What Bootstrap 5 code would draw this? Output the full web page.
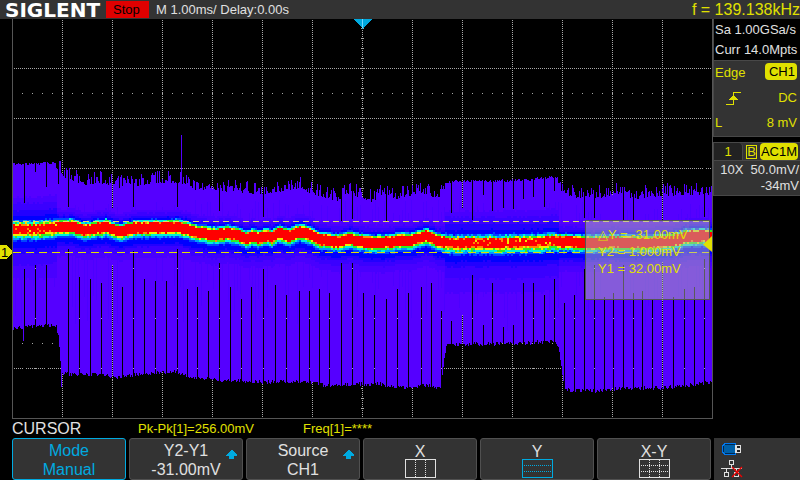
<!DOCTYPE html>
<html lang="en">
<head>
<meta charset="utf-8">
<meta name="viewport" content="width=device-width, initial-scale=1">
<title>Siglent oscilloscope</title>
<link rel="stylesheet" href="https://cdn.jsdelivr.net/npm/bootstrap@5.3.0/dist/css/bootstrap.min.css">
<style>
  body { background: #000; color: #e0e0e0; font: 13px/19px "Liberation Sans", Arial, sans-serif; }
  .topbar { background: #333; height: 19px; white-space: nowrap; }
  .brand { font: bold 20px/21px "DejaVu Sans", sans-serif; color: #fff; width: 106px; padding-left: 5px; }
  .run-state { background: #e00000; color: #000; width: 43px; height: 17px; line-height: 17px; padding-left: 7px; margin-right: 7px; }
  .yel { color: #e0e000; }
  .freq { font-size: 16px; }
  .side { width: 87px; white-space: nowrap; }
  .panel { background: #333; border: 1px solid #484848; border-right: 0; padding: 0 3px 0 1px; }
  .acq { background: #000; border-top: 0; border-bottom: 0; padding: 1px 0 0 1px; line-height: 20px; }
  .trigger { padding-top: 2px; height: 77px; }
  .trigger > div { height: 25px; }
  .pill { background: #e0e000; color: #000; border-radius: 4px; line-height: 17px; padding: 0 1px; }
  .pill-wide { padding: 0 2px 0 4px; }
  .chan-tabs { background: #333; border: 1px solid #484848; border-right: 0; margin-top: 5px; height: 19px; }
  .chan-no { background: #222; width: 29px; border-right: 1px solid #484848; border-radius: 0 4px 0 0; line-height: 18px; }
  .bw { border: 1px solid #e0e000; line-height: 12px; }
  .chan-tags { gap: 3px; padding-right: 2px; }
  .chan-info { border-top: 0; padding: 1px 1px 0 2px; line-height: 16px; height: 35px; }
  .status { background: #333; height: 42px; margin-left: 1px; padding: 4px 0 0 7px; }
  .cursor-box { top: 201px; right: 3px; width: 125px; height: 80px; padding: 5px 0 0 12px; line-height: 17px;
    background: rgba(182,182,182,.5); border: 1px solid #555; }
  .readout { height: 19px; }
  .menu-name { font-size: 16px; width: 126px; }
  .pkpk { width: 165px; }
  .softkeys { display: grid; grid-template-columns: repeat(6, 1fr); gap: 3px; padding: 0 2px 0 12px; height: 42px; }
  .softkey { background: #333; color: #e0e0e0; border: 1px solid #505050; border-radius: 3px; padding: 2px 0 0; font-size: 16px; line-height: 19px; }
  .softkey.on { color: #00aae0; border-color: #00aae0; }
  .softkey .arrow { right: 5px; top: 11px; }
  .softkey .glyph { margin-top: -2px; }
</style>
</head>
<body class="d-flex flex-column min-vh-100">
<header class="topbar d-flex align-items-center">
  <div class="brand align-self-start">SIGLENT</div>
  <div class="run-state">Stop</div>
  <div>M 1.00ms/ Delay:0.00s</div>
  <div class="freq yel ms-auto">f = 139.138kHz</div>
</header>
<main class="d-flex flex-fill">
  <section class="flex-fill d-flex flex-column">
    <div class="position-relative">
      <svg id="plot" class="d-block w-100" viewBox="0 19 713 400" shape-rendering="crispEdges" role="img" aria-label="Channel 1 waveform">
        <g id="grid" stroke="#a8a8a8" fill="none"></g>
        <g id="wave"></g>
        <path d="M12.5 19V418.5H712.5V19" fill="none" stroke="#555"/>
        <path d="M13 221.5H712" stroke="#e0e060" stroke-dasharray="6 4"/>
        <path d="M13 252.5H712" stroke="#e0e000" stroke-dasharray="8 5"/>
        <path d="M353 19H372L363 28V29H362V28Z" fill="#00aae0"/>
        <path d="M362.5 19V28" stroke="#70d8ff"/>
        <path d="M0 245H7L12 251V253L7 259H0Z" fill="#e0e000"/>
        <text x="1" y="257" font-size="13" fill="#000">1</text>
      </svg>
      <div class="cursor-box position-absolute yel text-nowrap">
        <div>△Y = -31.00mV</div>
        <div>Y2 = 1.000mV</div>
        <div>Y1 = 32.00mV</div>
      </div>
      <svg class="position-absolute top-0 start-0 w-100" viewBox="0 19 713 400" aria-hidden="true"><path d="M712 236V252L703 244.500Z" fill="#e0e000"/></svg>
    </div>
    <div class="readout d-flex ps-2">
      <div class="menu-name ps-1">CURSOR</div>
      <div class="yel pkpk ps-1">Pk-Pk[1]=256.00mV</div>
      <div class="yel ps-1">Freq[1]=****</div>
    </div>
    <div class="softkeys">
      <button class="softkey on" type="button">Mode<br>Manual</button>
      <button class="softkey position-relative" type="button">Y2-Y1<br>-31.00mV
        <svg class="arrow position-absolute" width="11" height="10" shape-rendering="crispEdges"><path d="M5 0H6L11 5V6H8V9H3V6H0V5Z" fill="#00aae0"/></svg></button>
      <button class="softkey position-relative" type="button">Source<br>CH1
        <svg class="arrow position-absolute" width="11" height="10" shape-rendering="crispEdges"><path d="M5 0H6L11 5V6H8V9H3V6H0V5Z" fill="#00aae0"/></svg></button>
      <button class="softkey" type="button"><span class="d-block">X</span>
        <svg class="glyph d-block mx-auto" width="31" height="19" fill="none" stroke="#e0e0e0" shape-rendering="crispEdges"><path d="M.5 .5H30.500V18.500H.5Z"/><path d="M10.500 1V18M20.500 1V18" stroke-dasharray="1 1"/></svg></button>
      <button class="softkey" type="button"><span class="d-block">Y</span>
        <svg class="glyph d-block mx-auto" width="31" height="19" fill="none" stroke="#00aae0" shape-rendering="crispEdges"><path d="M.5 .5H30.500V18.500H.5Z"/><path d="M2 6.500H29M2 12.500H29" stroke-dasharray="1 1"/></svg></button>
      <button class="softkey" type="button"><span class="d-block">X-Y</span>
        <svg class="glyph d-block mx-auto" width="31" height="19" fill="none" stroke="#e0e0e0" shape-rendering="crispEdges"><path d="M.5 .5H30.500V18.500H.5Z"/><path d="M10.500 1V18M20.500 1V18M2 6.500H29M2 12.500H29" stroke-dasharray="1 1"/></svg></button>
    </div>
  </section>
  <aside class="side d-flex flex-column flex-shrink-0">
    <div class="panel acq"><div>Sa 1.00GSa/s</div><div>Curr 14.0Mpts</div></div>
    <div class="panel trigger yel">
      <div class="d-flex justify-content-between align-items-start"><span>Edge</span><span class="pill pill-wide">CH1</span></div>
      <div class="d-flex justify-content-between">
        <svg class="ms-2 mt-1" width="20" height="14" shape-rendering="crispEdges"><path d="M3 12.500H10.500V.5H18" fill="none" stroke="#e0e000"/><path d="M10 3H11L15 8H6Z" fill="#e0e000"/></svg>
        <span>DC</span></div>
      <div class="d-flex justify-content-between"><span>L</span><span>8 mV</span></div>
    </div>
    <div class="chan-tabs d-flex yel">
      <div class="chan-no text-center">1</div>
      <div class="chan-tags d-flex align-items-center justify-content-end flex-fill"><span class="bw">B</span><span class="pill">AC1M</span></div>
    </div>
    <div class="panel chan-info text-end"><div>10X&nbsp; 50.0mV/</div><div>-34mV</div></div>
    <div class="status mt-auto">
      <svg class="d-block" width="24" height="36">
        <g shape-rendering="crispEdges">
          <path d="M14 1.500H4L1.500 4V10L4 12.500H14Z" fill="#0060a8" stroke="#0078f0"/>
          <path d="M4 2.500H14M2.500 4V10M4 11.500H14" stroke="#002850"/>
          <path d="M14 3H20V11H14Z" fill="#e0e0e0"/><path d="M16 4H19V6H16ZM16 8H19V10H16Z" fill="#222"/>
          <path d="M8.500 18.500H12.500V22.500H8.500ZM10.500 23V26M0 26.500H21M5.500 27V30M15.500 27V30M3.500 30.500H7.500V34.500H3.500ZM13.500 30.500H17.500V34.500H13.500Z" fill="none" stroke="#e0e0e0"/>
        </g>
        <path d="M11 25L21 35M21 25L11 35" fill="none" stroke="#f00000" stroke-width="1.4"/>
      </svg>
    </div>
  </aside>
</main>
<script src="https://cdn.jsdelivr.net/npm/bootstrap@5.3.0/dist/js/bootstrap.bundle.min.js"></script>
<script>
  const NS = 'http://www.w3.org/2000/svg';
  function add(parent, d, attrs) {
    const p = document.createElementNS(NS, 'path');
    p.setAttribute('d', d);
    for (const k in attrs) p.setAttribute(k, attrs[k]);
    document.getElementById(parent).appendChild(p);
  }
  let seed = 7;
  const rnd = () => (seed = (seed * 16807) % 2147483647) / 2147483647;
  // Linear interpolation through a flat list x0,y0,x1,y1,...
  function at(pts, x) {
    for (let i = 0; i < pts.length - 2; i += 2)
      if (x <= pts[i + 2]) return pts[i + 1] + (pts[i + 3] - pts[i + 1]) * (x - pts[i]) / (pts[i + 2] - pts[i]);
    return pts[pts.length - 1];
  }
  const top_ = [13,164,56,163,60,168,68,176,75,178,85,181,95,178,105,179,118,183,130,180,140,181,155,178,180,178,190,182,198,187,212,184,220,187,235,187,245,188,260,190,275,187,290,186,300,182,310,189,325,193,337,196,347,189,362,193,372,197,382,190,395,194,410,191,425,189,438,195,445,184,452,181,500,181,530,180,545,177,557,178,562,188,575,193,600,193,620,189,632,195,650,192,685,190,712,190];
  const bot = [13,328,22,328,30,326,56,325,58,337,61,372,63,374,90,374,118,377,140,374,175,372,195,378,240,381,260,382,300,381,330,386,362,384,380,384,400,388,430,385,441,388,442,375,446,344,480,344,530,343,555,341,559,350,562,376,565,390,600,391,620,388,660,388,690,385,712,382];
  const mid = [13,229,40,229,55,227,72,227,83,230,105,227,120,232,133,228,150,228,178,227,187,230,200,233,215,235,228,233,245,238,252,236,258,238,265,236,271,237,279,233,288,236,298,232,305,233,318,239,330,241,338,242,347,239,355,240,362,242,375,243,390,242,402,240,410,241,425,236,437,241,445,243,500,243,540,242,550,241,590,243,610,242,640,243,672,241,685,237,700,236,712,237];

  // Graticule
  let g = '';
  for (let x = 62; x < 712; x += 50) g += `M${x + .5} 20V418`;
  for (let y = 68; y < 418; y += 50) g += `M14 ${y + .5}H712`;
  add('grid', g, {'stroke-dasharray': '1 1'});
  g = '';
  for (let x = 22; x < 712; x += 10) for (const y of [93, 343]) g += `M${x} ${y + .5}h1`;
  for (let y = 28; y < 418; y += 10) g += `M361 ${y + .5}h3`;
  add('grid', g);

  // Envelope body
  let body = '', dim = '';
  for (let x = 13; x < 712; x++) {
    const calm = x < 56 || (x > 444 && x < 558), r = rnd();
    let t = at(top_, x) + (calm ? (r - .5) * 3 : (r * r * -13 + 5));
    if (x === 181) t = 135;
    let b = at(bot, x) + (rnd() - .5) * 4;
    if (x === 23) b = 341;
    if (x === 61) b = 387;
    body += `M${x} ${Math.round(t)}h1V${Math.round(b)}h-1z`;
    if (x % 3 === 0 && rnd() < .5) dim += `M${x} ${200 + Math.round(rnd() * 15)}h1v${60 + Math.round(rnd() * 60)}h-1z`;
  }
  add('wave', body, {fill: '#5500ff'});
  add('wave', dim, {fill: '#4c00ff'});

  // Persistence heat: 2px cells coloured by distance from the trace centre
  const cols = ['#ff0000', '#ff8800', '#eeee00', '#33ee22', '#00eedd', '#0099ff', '#0044ff', '#0000ff', '#2200ff', '#3a00ff', '#4800ff'];
  const layers = cols.map(() => '');
  for (let x = 13; x < 712; x += 2) {
    const wide = x < 57 || (x > 444 && x < 559);
    const c = at(mid, x), jit = (rnd() - .5) * 1.2;
    for (let y = 190; y < 310; y += 2) {
      const d = y + 1 - c + jit, up = d < 0, a = Math.abs(d) + (rnd() - .5) * (wide ? 1.6 : .8);
      const lim = up ? (wide ? [4,4.6,5.3,6,7,8,9,13,19,26,32] : [4.9,5.1,5.6,6.4,7.3,7.8,8.4,10,12,15,18])
                     : (wide ? [4.2,5,6.4,7.6,9.2,10.5,12,19,24,36,50] : [5,5.3,6,7.2,8.5,9.5,11,16,19,24,30]);
      let k = lim.findIndex(v => a < v);
      if (k < 0) continue;
      if (wide && k === 0 && rnd() < .08) k = 1 + Math.floor(rnd() * 2);
      layers[k] += `M${x} ${y}h2v2h-2z`;
    }
  }
  layers.forEach((d, i) => add('wave', d, {fill: cols[i]}));

  // Dropouts: x, end of the upper slit (0 = none), start of the lower slit
  const slits = [24,203,269, 35,172,265, 46,187,265, 58,184,0, 68,207,249, 79,0,277, 90,0,279, 101,0,283, 122,0,287, 133,207,251, 144,0,279, 155,0,281, 166,0,281, 177,207,249, 187,0,289, 197,0,287, 208,0,291, 219,211,263, 230,0,287, 241,0,299, 251,0,287, 263,217,269, 275,0,285, 286,0,295, 299,0,291, 309,0,291, 319,0,289, 329,0,293, 341,221,263, 352,219,263, 363,0,293, 374,0,295, 386,222,299, 397,0,289, 408,0,293, 421,0,287, 431,0,283, 441,0,311, 451,213,321, 472,220,275, 483,195,325, 492,211,283, 503,208,327, 513,209,325, 523,199,283, 533,197,283, 544,207,295, 554,191,279, 564,0,303, 574,0,295, 584,218,269, 594,218,265, 604,0,297, 613,0,293, 623,220,265, 633,220,293, 642,0,291, 652,0,299, 673,0,297, 684,0,289, 694,0,287, 704,217,259];
  let cut = '', dots = '';
  for (let i = 0; i < slits.length; i += 3) {
    const [x, u, l] = slits.slice(i, i + 3);
    if (u) cut += `M${x} 150h1V${u}h-1z`;
    if (l) {
      cut += `M${x} ${l}h1V395h-1z`;
      for (const y of [268, 318, 368]) if (y > l && i % 2) dots += `M${x} ${y}h1v1h-1z`;
    }
  }
  add('wave', cut, {fill: '#000'});
  add('wave', dots, {fill: '#a8a8a8'});
  const gaps = 'M112.500 180V208M462.500 180V208M112.500 265V380M462.500 315V345M662.500 192V220M662.500 262V388';
  add('wave', gaps, {stroke: '#000'});
  add('wave', gaps, {stroke: '#a8a8a8', 'stroke-dasharray': '1 1'});
</script>
</body>
</html>
